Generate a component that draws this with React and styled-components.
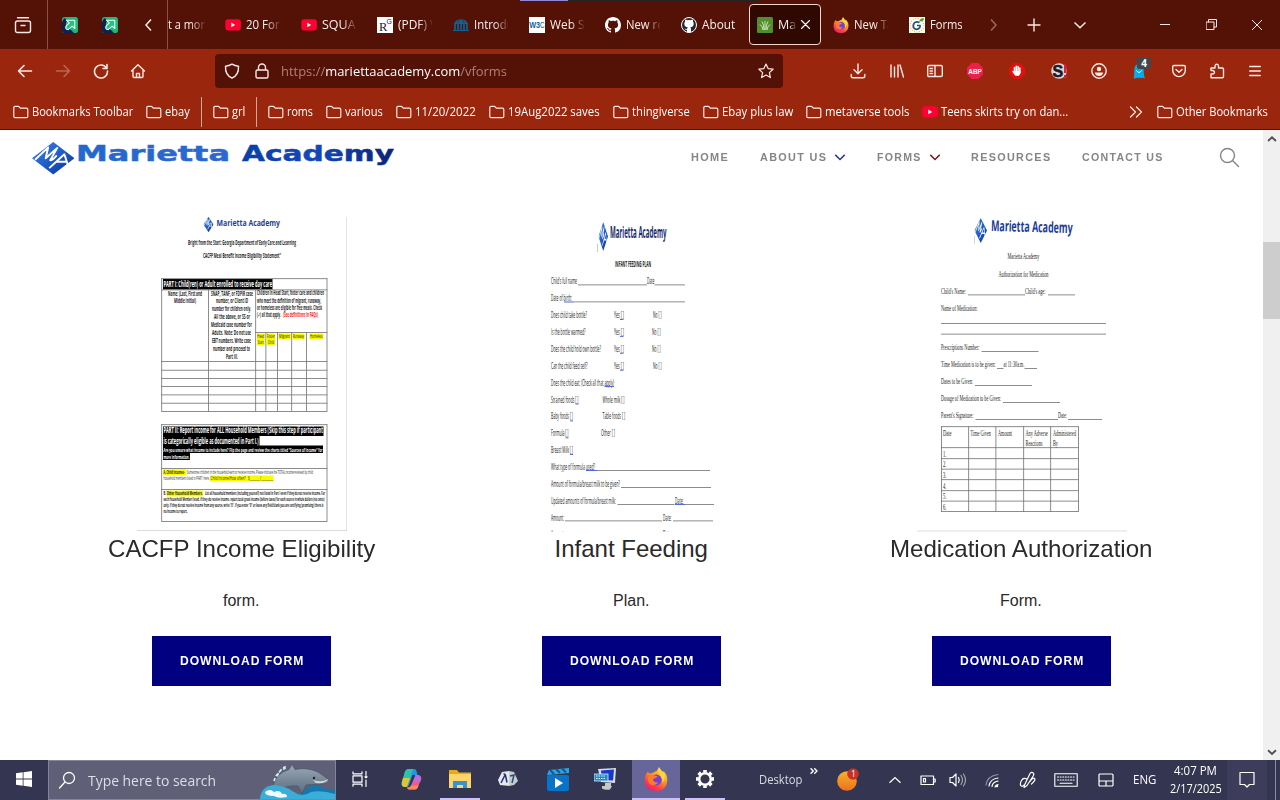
import React, { useLayoutEffect, useRef, useState } from "react";
import styled, { createGlobalStyle } from "styled-components";

const Global = createGlobalStyle`
  * { box-sizing: border-box; }
  body { margin: 0; overflow: hidden; background: #fff; }
`;

const ui = `"Open Sans", "Noto Sans", sans-serif`;
const arial = `"Liberation Sans", Arial, sans-serif`;

/* ---------- text that keeps a given width ---------- */
const FitBox = styled.span`
  display: block;
  flex: none;
  width: ${(p) => p.$w}px;
  white-space: nowrap;
  line-height: ${(p) => p.$lh || 20}px;
`;
const FitInner = styled.span`
  display: inline-block;
  transform-origin: 0 50%;
  white-space: pre;
`;
function Fit({ w, lh, children, className }) {
  const ref = useRef(null);
  const [k, setK] = useState(1);
  useLayoutEffect(() => {
    if (ref.current) setK(w / ref.current.offsetWidth);
  }, [w]);
  return (
    <FitBox $w={w} $lh={lh} className={className}>
      <FitInner ref={ref} style={{ transform: `scaleX(${k})` }}>{children}</FitInner>
    </FitBox>
  );
}

/* ---------- shell ---------- */
const Screen = styled.div`
  width: 1280px;
  height: 800px;
  display: flex;
  flex-direction: column;
  overflow: hidden;
  font-family: ${ui};
  position: relative;
`;
const Slot = styled.div`
  flex: none;
  width: ${(p) => p.$w || 24}px;
  margin-left: ${(p) => p.$ml || 0}px;
  height: ${(p) => p.$h || 24}px;
  display: flex;
  align-items: center;
  justify-content: center;
  position: relative;
`;

/* ---------- tab strip ---------- */
const TabStrip = styled.div`
  height: 49px;
  flex: none;
  background: #541207;
  display: flex;
  align-items: center;
  padding-left: 11px;
  position: relative;
`;
const TopEdge = styled.div`
  position: absolute;
  top: 0;
  left: 520px;
  width: 241px;
  height: 1px;
  background: linear-gradient(90deg, #8f86d6 48px, #242424 48px);
`;
const StripDivider = styled.div`
  flex: none;
  width: 1px;
  height: 49px;
  margin-left: ${(p) => p.$ml}px;
  background: #8a5247;
`;
const TabList = styled.div`
  display: flex;
  gap: 4px;
  flex: none;
  width: 813px;
  height: 49px;
  align-items: center;
`;
const TabBox = styled.div`
  flex: none;
  width: ${(p) => p.$w || 72}px;
  height: 41px;
  display: flex;
  align-items: center;
  gap: 5px;
  padding-left: ${(p) => (p.$w ? 0 : p.$active ? 7 : 8)}px;
  border-radius: 4px;
  background: ${(p) => (p.$active ? "#2f0802" : "transparent")};
  border: ${(p) => (p.$active ? "1px solid #f6d5cd" : "0")};
`;
const TabLabel = styled.div`
  width: ${(p) => p.$clip}px;
  overflow: hidden;
  font-size: 12.5px;
  color: #fbeeeb;
  mask-image: ${(p) => (p.$fade ? "linear-gradient(90deg, #000 60%, rgba(0, 0, 0, 0.1) 100%)" : "none")};
`;

/* ---------- nav bar ---------- */
const NavBar = styled.div`
  height: 45px;
  flex: none;
  background: #99260d;
  display: flex;
  align-items: center;
  padding: 0 0 1px 13px;
`;
const UrlBox = styled.div`
  width: 568px;
  height: 34px;
  margin-left: 65px;
  border-radius: 4px;
  background: #541207;
  display: flex;
  align-items: center;
  padding-left: 5px;
  font-size: 13px;
  color: #b08078;
`;
const Host = styled.span`color: #fff;`;
const Badge = styled.div`
  position: absolute;
  left: 10px;
  top: -2px;
  width: 14px;
  height: 12px;
  border-radius: 2px;
  background: #43474d;
  color: #fff;
  font: bold 10px/12px ${ui};
  text-align: center;
`;

/* ---------- bookmarks ---------- */
const BookmarkBar = styled.div`
  height: 36px;
  flex: none;
  background: #99260d;
  border-bottom: 1px solid #5c1104;
  display: flex;
  align-items: center;
  padding-left: 13px;
`;
const BookmarkItem = styled.div`
  flex: none;
  display: flex;
  align-items: center;
  gap: 3px;
  margin-right: ${(p) => p.$mr}px;
  font-size: 12px;
  color: #fff;
`;
const MarkDivider = styled.div`
  width: 1px;
  height: 30px;
  flex: none;
  margin-right: 11px;
  background: #d3a59b;
`;

/* ---------- web page ---------- */
const Page = styled.div`
  height: 630px;
  flex: none;
  display: flex;
`;
const Content = styled.div`
  width: 1263px;
  background: #fff;
  font-family: ${arial};
`;
const ScrollTrack = styled.div`
  width: 17px;
  background: #f0f0f0;
  display: flex;
  flex-direction: column;
  align-items: center;
`;
const ScrollThumb = styled.div`
  width: 17px;
  height: 77px;
  margin: 95px 0 424px;
  background: #cdcdcd;
`;
const SiteHeader = styled.header`
  height: 87px;
  display: flex;
  align-items: flex-start;
  padding-left: 32px;
`;
const SiteNav = styled.nav`
  display: flex;
  align-items: center;
  height: 54px;
  margin-left: 294px;
  color: #858585;
  font-size: 11.5px;
  font-weight: bold;
  letter-spacing: 1.4px;
`;
const NavEntry = styled.div`
  display: flex;
  align-items: center;
  gap: 7px;
  margin-right: ${(p) => p.$mr}px;
`;
const CardRow = styled.main`
  display: grid;
  grid-template-columns: 390px 390px 390px;
  padding-left: 46px;
`;
const Card = styled.section`
  display: flex;
  flex-direction: column;
  align-items: center;
`;
const CardTitle = styled.h2`
  margin: 4px 0 0;
  font-size: 24px;
  font-weight: 400;
  color: #2a2a2a;
`;
const CardText = styled.div`
  margin-top: 30px;
  font-size: 16px;
  color: #2a2a2a;
`;
const DownloadButton = styled.button`
  width: 179px;
  height: 50px;
  margin-top: 26px;
  border: 0;
  padding: 0 0 0 1px;
  background: #000080;
  color: #fff;
  display: flex;
  align-items: center;
  justify-content: center;
  font: bold 12.5px ${arial};
  letter-spacing: 1px;
`;

/* ---------- task bar ---------- */
const TaskBar = styled.div`
  height: 40px;
  flex: none;
  background: #343550;
  display: flex;
  align-items: center;
  color: #fff;
`;
const SearchBox = styled.div`
  width: 288px;
  height: 40px;
  flex: none;
  border: 1px solid #85859a;
  background: #5f5f78;
  display: flex;
  align-items: center;
  padding-left: 9px;
  font-size: 15px;
  color: #dedee6;
`;
const AppCell = styled.div`
  flex: none;
  width: ${(p) => p.$w}px;
  margin-left: ${(p) => p.$ml || 0}px;
  height: 40px;
  display: flex;
  align-items: center;
  justify-content: center;
  background: ${(p) => (p.$active ? "#66669a" : "transparent")};
  border-bottom: 2px solid ${(p) => (p.$open ? "#cdc0f8" : "transparent")};
`;
const TrayText = styled.div`
  flex: none;
  margin-left: ${(p) => p.$ml}px;
  margin-top: ${(p) => p.$mt || 0}px;
  font-size: 12px;
  color: ${(p) => p.$c || "#fff"};
`;
const Clock = styled.div`
  flex: none;
  width: 53px;
  margin-left: 13px;
  display: flex;
  flex-direction: column;
  align-items: center;
  font-size: 12px;
`;
const NoticeCell = styled.div`
  flex: none;
  display: flex;
  align-items: center;
  justify-content: center;
  width: 40px;
  height: 40px;
  margin-left: 5px;
  background: #3d3d5b;
`;
const DesktopEdge = styled.div`
  width: 1px;
  height: 40px;
  margin-left: 8px;
  background: #8b8ba0;
`;

/* ---------- icons ---------- */
const Line = ({ w = 16, h = 16, d, c = "#fbe9e5", sw = 1.4, children, fill = "none" }) => (
  <svg width={w} height={h} viewBox={`0 0 ${w} ${h}`} fill={fill} stroke={c} strokeWidth={sw} strokeLinecap="round" strokeLinejoin="round">
    {d && <path d={d} />}
    {children}
  </svg>
);
const Folder = () => <Line w={16} h={14} sw={1.2} d="M.8 11.5v-9q0-1.200 1.200-1.200h3.200q.6 0 1 .5l.8 1q.4.4 1 .4h5.500q1.300 0 1.300 1.200v7q0 1.200-1.200 1.200H2q-1.200 0-1.200-1.100z" />;
const YouTube = () => (
  <svg width="16" height="16" viewBox="0 0 16 16"><rect x="0.3" y="2.2" width="15.6" height="11.4" rx="3" fill="#ff0033" /><path d="M6.3 5.6v4.6L10.2 8z" fill="#fff" /></svg>
);
const Arrowed = () => (
  <svg width="16" height="16" viewBox="0 0 16 16">
    <rect width="16" height="16" rx="2.5" fill="#20b779" />
    <path d="M0 5q1-3 3-4l2 3q-2 2-1 5l5 4 3 3H2.5Q0 16 0 13.5z" fill="#13204f" />
    <path d="M4.500 3.200h8.300v8.300l-2.600-2.400-4 3.600-1.800-.6q-1.500-2 .3-3.800L7.200 6z" fill="#27bf80" stroke="#e5fff3" strokeWidth="1.100" strokeLinejoin="round" />
  </svg>
);
const ResearchGate = () => (
  <svg width="16" height="16" viewBox="0 0 16 16"><rect width="16" height="16" fill="#fff" /><text x="2" y="13.5" fontFamily="Liberation Serif" fontSize="12.5" fill="#223">R</text><text x="9.6" y="6.8" fontFamily="Liberation Sans" fontSize="7" fill="#223">G</text></svg>
);
const Dome = () => (
  <svg width="16" height="16" viewBox="0 0 16 16"><path d="M1 7q1.5-4.8 7-4.8T15 7zM0 13h16v1H0z" fill="#0d6297" /><path d="M2 6.5V14M5 5v9M8 3v11M11 5v9M14 6.5V14" stroke="#0d6297" strokeWidth="1.7" /><path d="M4.8 6q.5-3 2-3.3M11.2 6q-.5-3-2-3.3" stroke="#541207" strokeWidth=".6" fill="none" /></svg>
);
const W3C = () => (
  <svg width="16" height="16" viewBox="0 0 16 16"><rect width="16" height="16" fill="#fff" /><text x="0.2" y="11" fontFamily="Liberation Sans" fontWeight="bold" fontSize="9" textLength="10.8" lengthAdjust="spacingAndGlyphs" fill="#0b5ea8">W3</text><text x="11" y="11" fontFamily="Liberation Sans" fontSize="8.6" textLength="4.600" lengthAdjust="spacingAndGlyphs" fill="#444">C</text></svg>
);
const GH = "M8 0C3.58 0 0 3.58 0 8c0 3.54 2.29 6.53 5.47 7.59.4.07.55-.17.55-.38 0-.19-.01-.82-.01-1.49-2.01.37-2.53-.49-2.69-.94-.09-.23-.48-.94-.82-1.13-.28-.15-.68-.52-.01-.53.63-.01 1.08.58 1.23.82.72 1.21 1.87.87 2.33.66.07-.52.28-.87.51-1.07-1.78-.2-3.64-.89-3.64-3.95 0-.87.31-1.59.82-2.15-.08-.2-.36-1.02.08-2.12 0 0 .67-.21 2.2.82.64-.18 1.32-.27 2-.27s1.36.09 2 .27c1.53-1.04 2.2-.82 2.2-.82.44 1.1.16 1.92.08 2.12.51.56.82 1.27.82 2.15 0 3.07-1.87 3.75-3.65 3.95.29.25.54.73.54 1.48 0 1.07-.01 1.93-.01 2.2 0 .21.15.46.55.38A8.01 8.01 0 0 0 16 8c0-4.42-3.58-8-8-8z";
const GitHub = ({ dark }) => (
  <svg width="16" height="16" viewBox="0 0 16 16">
    {dark && <circle cx="8" cy="8" r="7.500" fill="#24292f" stroke="#fff" />}
    <path d={dark ? "M6 15.200v-2.500q-2 .3-2.700-1.200 1.500.8 2.900.2.100-.8.600-1.200Q3.300 10 3.300 6.800q0-1.300.8-2.200-.3-1 .1-2.100 1.200 0 2.300.8 1.500-.4 3 0 1.100-.8 2.300-.8.400 1.100.1 2.100.8.900.8 2.200 0 3.200-3.500 3.700.8.700.8 2v2.700z" : GH} fill="#fff" />
  </svg>
);
const Grass = () => (
  <svg width="16" height="16" viewBox="0 0 16 16"><rect width="16" height="16" rx="1.5" fill="#538e2e" /><path d="M8 13V4M7 13Q7 7.500 5 4.500M9 13q0-5.500 2-8.500M6 13Q5.800 9.500 3 7.500M10 13q.2-3.500 3-5.500" stroke="#e6f7d5" strokeWidth=".8" fill="none" /></svg>
);
const Firefox = ({ s = 16 }) => (
  <svg width={s} height={s} viewBox="0 0 24 24">
    <defs>
      <linearGradient id="ffa" x1=".8" y1="0" x2=".2" y2="1"><stop offset="0" stopColor="#fff04a" /><stop offset=".4" stopColor="#ff9a20" /><stop offset=".75" stopColor="#ff3c47" /><stop offset="1" stopColor="#ea1886" /></linearGradient>
    </defs>
    <path d="M3.5 5q1.2.3 2 1.5 1.8-.8 3-.4 2-1.6 4.3-2L15 0q1.5 2.8 4 4.7l1-.3q3.6 4.2 3.3 9Q22.500 24 12 24 2 24 .8 14.500.3 9 3.500 5z" fill="url(#ffa)" />
    <circle cx="12.300" cy="13" r="5.400" fill="#7141d8" />
    <path d="M4 10q3-3.800 6.500-1.500l3 .8q.3 1.200-2.200 1.700-2.500.6-2.100 2.800 1.800 2.400 5.300 1.500-2.500 4-7.500 2.500Q3.500 16 4 10z" fill="#ff7a2e" />
    <path d="M14.500 2q-.6 5 2.700 7.500 2 3 .8 6.500 3.500-3 2.500-8-1-1.800-3-3-1.800-1.200-3-3z" fill="#ffd83c" />
  </svg>
);
const FormsG = () => (
  <svg width="16" height="16" viewBox="0 0 16 16"><rect width="16" height="16" fill="#fff" /><circle cx="8" cy="8.300" r="6.800" fill="none" stroke="#e8c34a" strokeWidth="1.300" strokeDasharray="1.200 1.300" /><path d="M10.500 5.500Q7 3.700 5 6.300q-1.700 3.200.3 5.200 3 1.800 5.200-.6.800-1 .5-2.400H8" fill="none" stroke="#28526e" strokeWidth="1.700" /><path d="M10 4.500Q11 1 15 1q0 4-5 3.500z" fill="#4ba52c" /></svg>
);

const Chev = ({ dir, c, w = 14, sw }) => {
  const d = { left: "M9 1.500L4 7l5 5.500", right: "M5 1.500L10 7l-5 5.500", down: "M1.500 4.500L7 9.800l5.500-5.300", up: "M1.500 9.800L7 4.500l5.500 5.300" }[dir];
  return <svg width={w} height={w} viewBox="0 0 14 14" fill="none" stroke={c || "#fbe9e5"} strokeWidth={sw || 1.500}><path d={d} /></svg>;
};

/* ---------- thumbnails ---------- */
const T = ({ x, y, w, s = 6.4, b, c = "#222", f, children }) => (
  <text x={x} y={y} textLength={w} lengthAdjust="spacingAndGlyphs" fontSize={s} fontWeight={b ? 700 : 400} fill={c} fontFamily={f || "'Open Sans', sans-serif"} style={{ whiteSpace: "pre" }}>{children}</text>
);
const L = ({ x, y, w, c = "#707070", h = 0.8 }) => <rect x={x} y={y} width={w} height={h} fill={c} />;
const V = ({ x, y, h, c = "#707070" }) => <rect x={x} y={y} width={0.8} height={h} fill={c} />;
const Emblem = ({ x, y, w, h, id }) => (
  <svg x={x} y={y} width={w} height={h} viewBox="0 0 42 34" preserveAspectRatio="none">
    <defs><linearGradient id={id} x1="0" y1="0" x2="1" y2="1"><stop offset="0" stopColor="#3f86e6" /><stop offset=".5" stopColor="#1f5cc9" /><stop offset="1" stopColor="#0b2f98" /></linearGradient></defs>
    <path d="M21 .5L42 17 21 33.500 0 17z" fill={`url(#${id})`} />
    <path d="M3 18.500L16 6l-2.500 11L25 6.500 18 19q2.500 0 6.500-5M17 27L32 13l3.500 11M23.500 20.500h11" fill="none" stroke="#fff" strokeWidth="1.900" strokeLinejoin="round" />
  </svg>
);

const Cacfp = () => (
  <svg width="212" height="315" viewBox="135 217 212 315">
    <Emblem x={203.500} y={216.500} w={10} h={16} id="e1" />
    <T x={216.500} y={225.500} w={63.500} s={9.500} b c="#1d419b">Marietta Academy</T>
    <T x={188} y={244.800} w={108} b>Bright from the Start: Georgia Department of Early Care and Learning</T>
    <T x={203} y={258.300} w={78} b>CACFP Meal Benefit Income Eligibility Statement"</T>
    <rect x={163} y={279} width={109.500} height={10.500} fill="#000" />
    <T x={163.500} y={287} w={108.500} s={8} b c="#fff">PART I: Child(ren) or Adult enrolled to receive day care</T>
    {[278.300, 289.500, 361, 369.800, 378, 386.200, 394.500, 402.800, 411].map((y) => <L key={y} x={161.300} y={y} w={166} />)}
    <L x={255.300} y={332} w={72} />
    {[161.300, 326.600].map((x) => <V key={x} x={x} y={278.300} h={133} />)}
    {[208, 255.300].map((x) => <V key={x} x={x} y={289.500} h={122} />)}
    {[265.500, 277.200, 291.300, 306].map((x) => <V key={x} x={x} y={332} h={79} />)}
    <T x={168} y={295.500} w={34} b>Name: (Last, First and</T>
    <T x={174} y={303.300} w={22} b>Middle Initial)</T>
    {[["SNAP, TANF, or FDPIR case", 211, 42], ["number, or Client ID", 216, 32], ["number for children only.", 212, 39], ["All the above, or SS or", 214, 36], ["Medicaid case number for", 211, 41], ["Adults. Note: Do not use", 212, 39], ["EBT numbers. Write case", 212, 39], ["number and proceed to", 213, 37], ["Part III.", 226, 12]].map(([t, x, w], i) => (
      <T key={t} x={x} y={295.500 + i * 7.950} w={w} b>{t}</T>
    ))}
    <T x={257} y={295.300} w={67} b>Children in Head Start, foster care and children</T>
    <T x={257} y={302.700} w={64} b>who meet the definition of migrant, runaway,</T>
    <T x={257} y={310} w={65} b>or homeless are eligible for free meals. Check</T>
    <T x={257} y={317.300} w={24} b>(✓) all that apply.</T>
    <T x={283} y={317.300} w={35} b c="#f11">(See definitions in FAQs)</T>
    {[[257, 7.500, 12], [266.500, 8.500, 12], [278.500, 12, 6], [292.500, 12, 6], [309.500, 13.500, 6]].map(([x, w, h]) => <rect key={x} x={x} y={333.500} width={w} height={h} fill="#f6f600" />)}
    <T x={257.300} y={338} w={7} s={5}>Head</T><T x={257.800} y={344.300} w={6} s={5}>Start</T>
    <T x={267} y={338} w={8} s={5}>Foster</T><T x={268} y={344.300} w={6} s={5}>Child</T>
    <T x={279} y={338} w={11} s={5}>Migrant</T><T x={293} y={338} w={11} s={5}>Runaway</T><T x={310} y={338} w={12.500} s={5}>Homeless</T>
    <rect x={163} y={426.500} width={160.500} height={9.500} fill="#000" />
    <rect x={163} y={436} width={96.500} height={10} fill="#000" />
    <rect x={163} y={445.500} width={160} height={7.500} fill="#000" />
    <rect x={163} y={452.500} width={27} height={7.500} fill="#000" />
    <T x={163.500} y={433.300} w={159.500} s={8} b c="#fff">PART II: Report income for ALL Household Members (Skip this step if participant</T>
    <T x={163.500} y={443.700} w={95} s={8} b c="#fff">is categorically eligible as documented in Part I.)</T>
    <T x={163.500} y={451.500} w={159} s={5.800} b c="#fff">Are you unsure what income to include here? Flip the page and review the charts titled "Sources of Income" for</T>
    <T x={163.500} y={458.500} w={26} s={5.800} b c="#fff">more information.</T>
    {[424.300, 468, 489, 521].map((y) => <L key={y} x={161.300} y={y} w={166} />)}
    {[161.300, 326.600].map((x) => <V key={x} x={x} y={424.300} h={97} />)}
    <rect x={163} y={469.300} width={23.500} height={6} fill="#fbfb00" />
    <rect x={210} y={475.500} width={63.500} height={6} fill="#fbfb00" />
    <T x={163.500} y={473.600} w={21} s={5} b>A. Child Incomes-</T>
    <T x={187} y={473.600} w={126} s={5}>Sometimes children in the household earn or receive income. Please indicate the TOTAL income received by child</T>
    <T x={163.500} y={480.200} w={46} s={5}>household members listed in PART I here.</T>
    <T x={210.500} y={480.200} w={62.500} s={5}>Child Income/How often?   $________/_________</T>
    <rect x={166.500} y={490.500} width={36.500} height={6} fill="#fbfb00" />
    <T x={163.500} y={495} w={39} s={5} b>B. Other Household Members.</T>
    <T x={205} y={495} w={120} s={5} b>List all household members (including yourself) not listed in Part I even if they do not receive income. For</T>
    <T x={163.500} y={501} w={161} s={5} b>each Household Member listed, if they do receive income, report total gross income (before taxes) for each source in whole dollars (no cents)</T>
    <T x={163.500} y={507} w={160} s={5} b>only. If they do not receive income from any source, write "0". If you enter "0" or leave any field blank you are certifying (promising) there is</T>
    <T x={163.500} y={512.800} w={24} s={5} b>no income to report.</T>
    <L x={137} y={530} w={210} c="#dcdcdc" h={1} />
    <V x={346.200} y={217} h={314} c="#dcdcdc" />
  </svg>
);

const I = ({ x, y, w, children }) => <T x={x} y={y} w={w} s={8.500}>{children}</T>;
const Blue = ({ x, y, w }) => <L x={x} y={y} w={w} c="#5266dd" h={1} />;
const Infant = () => (
  <svg width="212" height="315" viewBox="525 217 212 315">
    <Emblem x={598.500} y={221.500} w={9.500} h={30} id="e2" />
    <T x={610} y={237.500} w={56.500} s={16} b c="#1a2c72">Marietta Academy</T>
    <V x={597} y={244} h={8} c="#bbb" />
    <T x={615} y={267} w={36} s={8} b>INFANT FEEDING PLAN</T>
    <I x={551} y={284} w={26}>Child's full name</I><L x={578} y={284.500} w={69} /><I x={647} y={284} w={7.500}>Date</I><L x={654.500} y={284.500} w={30.500} />
    <I x={551} y={301} w={21}>Date of birth:</I><L x={574} y={301.500} w={111} /><Blue x={564} y={301.500} w={10} />
    {[["Does child take bottle?", 36, 653], ["Is the bottle warmed?", 34.500, 652], ["Does the child hold own bottle?", 50, 652], ["Can the child feed self?", 36.500, 653]].map(([t, w, n], i) => (
      <g key={t}><I x={551} y={318 + i * 16.900} w={w}>{t}</I><I x={614} y={318 + i * 16.900} w={10}>Yes [ ]</I><Blue x={620} y={319 + i * 16.900} w={3.500} /><I x={n} y={318 + i * 16.900} w={8.500}>No [ ]</I></g>
    ))}
    <I x={551} y={385.500} w={63}>Does the child eat: (Check all that apply)</I><Blue x={604.500} y={386} w={9.500} />
    {[["Strained foods [ ]", 27.500, "Whole milk [ ]", 602.500, 22], ["Baby foods [ ]", 22, "Table foods [ ]", 602.500, 22.500], ["Formula [ ]", 17.500, "Other [ ]", 601, 14]].map(([a, w, b, x, v], i) => (
      <g key={a}><I x={551} y={402.500 + i * 16.900} w={w}>{a}</I><Blue x={548 + w} y={403.500 + i * 16.900} w={3} /><I x={x} y={402.500 + i * 16.900} w={v}>{b}</I></g>
    ))}
    <I x={551} y={453} w={22}>Breast Milk [ ]</I><Blue x={570} y={454} w={3} />
    <I x={551} y={470} w={44}>What type of formula used?</I><L x={597} y={470} w={113} /><Blue x={586} y={470} w={11} />
    <I x={551} y={487} w={69}>Amount of formula/breast milk to be given?</I><L x={621} y={487} w={90} />
    <I x={551} y={504} w={65}>Updated amounts of formula/breast milk:</I><L x={617.500} y={504} w={57} /><I x={675} y={504} w={8.500}>Date:</I><L x={685} y={504} w={29} /><Blue x={675} y={504} w={10} />
    <I x={551} y={520.500} w={13}>Amount:</I><L x={565} y={520.500} w={97} /><I x={663} y={520.500} w={8.500}>Date:</I><L x={673} y={520.500} w={40} />
    <I x={551} y={537} w={13}>Amount:</I><I x={663} y={537} w={8.500}>Date:</I>
  </svg>
);

const S = ({ x, y, w, children }) => <T x={x} y={y} w={w} s={9.200} f="'Liberation Serif', serif" c="#1c1c1c">{children}</T>;
const Medication = () => (
  <svg width="212" height="315" viewBox="915 217 212 315">
    <Emblem x={974.500} y={217.500} w={12.500} h={26} id="e3" />
    <g transform="rotate(1.500 991 230)"><T x={991} y={231} w={81.500} s={15} b c="#1a3c98">Marietta Academy</T></g>
    <V x={974} y={236} h={8} c="#ccc" />
    <S x={1007.500} y={259.300} w={32}>Marietta Academy</S>
    <S x={998.500} y={276.500} w={50}>Authorization for Medication</S>
    <S x={941} y={293.800} w={25}>Child's Name:</S><L x={968} y={294.500} w={57} /><S x={1025} y={293.800} w={20.500}>Child's age:</S><L x={1048} y={294.500} w={27} />
    <S x={941} y={310.800} w={36.500}>Name of Medication:</S>
    <L x={941} y={323} w={165} /><L x={941} y={333.700} w={165} />
    <S x={941} y={350.300} w={38.500}>Prescriptions Number:</S><L x={981.500} y={351} w={57} />
    <S x={941} y={367} w={54.500}>Time Medication is to be given:</S><L x={997} y={368} w={6.500} /><S x={1003.500} y={367} w={21}>at 11:30a.m.</S><L x={1024.500} y={368} w={12.500} />
    <S x={941} y={384} w={32}>Dates to be Given:</S><L x={975} y={385} w={57} />
    <S x={941} y={401.200} w={60}>Dosage of Medication to be Given:</S><L x={1003} y={402} w={57} />
    <S x={941} y={418.300} w={32.500}>Parent's Signature:</S><L x={975.500} y={419} w={82.500} /><S x={1058} y={418.300} w={9}>Date:</S><L x={1068} y={419} w={34} />
    {[426.300, 447.300, 458.300, 468.700, 479.300, 490.300, 500.700, 511.200].map((y) => <L key={y} x={941} y={y} w={137.500} />)}
    {[941, 968.300, 995.500, 1023.300, 1050.300, 1078].map((x) => <V key={x} x={x} y={426.300} h={85.500} />)}
    <S x={943} y={435.500} w={8.500}>Date</S><S x={970.500} y={435.500} w={20.500}>Time Given</S><S x={998} y={435.500} w={14}>Amount</S>
    <S x={1025.500} y={435.500} w={22.500}>Any Adverse</S><S x={1025.500} y={445.800} w={17}>Reactions</S><S x={1053} y={435.500} w={23}>Administered</S><S x={1053} y={445.800} w={5}>By</S>
    {[1, 2, 3, 4, 5, 6].map((n) => <S key={n} x={943} y={445.800 + n * 10.700} w={3.500}>{n + "."}</S>)}
    <L x={917} y={530.500} w={210} c="#dedede" h={1} />
  </svg>
);

const SiteLogo = () => (
  <svg width="365" height="48" viewBox="32 130 365 48">
    <defs><linearGradient id="lg" gradientUnits="userSpaceOnUse" x1="77" y1="0" x2="395" y2="0"><stop offset="0" stopColor="#2368cc" /><stop offset=".48" stopColor="#2b68d2" /><stop offset=".52" stopColor="#0b3fa8" /><stop offset=".75" stopColor="#1249b8" /><stop offset="1" stopColor="#0a2478" /></linearGradient></defs>
    <Emblem x={32} y={141.500} w={42.500} h={33.500} id="e0" />
    <g fontFamily="'DejaVu Sans', sans-serif" fontWeight="bold" fontSize="22" fill="url(#lg)" stroke="url(#lg)" strokeWidth=".5">
      <text x="76" y="161.300" textLength="154" lengthAdjust="spacingAndGlyphs">Marietta</text>
      <text x="242" y="161.300" textLength="152" lengthAdjust="spacingAndGlyphs">Academy</text>
    </g>
  </svg>
);

const tabs = [
  [<YouTube />, "20 For", 34], [<YouTube />, "SQUAR", 41], [<ResearchGate />, "(PDF) V", 39], [<Dome />, "Introdu", 40],
  [<W3C />, "Web St", 39], [<GitHub />, "New re", 38], [<GitHub dark />, "About", 33], [<Grass />, "Mar", 23, true],
  [<Firefox />, "New Ta", 39], [<FormsG />, "Forms", 33],
];
const marks = [
  ["Bookmarks Toolbar", 101, 13], ["ebay", 25, 11, true], ["grl", 13, 11, true], ["roms", 26, 13], ["various", 38, 13],
  ["11/20/2022", 61, 13], ["19Aug2022 saves", 92, 13], ["thingiverse", 58, 13], ["Ebay plus law", 71, 13], ["metaverse tools", 84, 13],
];
const cards = [
  [<Cacfp />, "CACFP Income Eligibility", 267, "form.", 36],
  [<Infant />, "Infant Feeding", 153, "Plan.", 36],
  [<Medication />, "Medication Authorization", 263, "Form.", 42],
];

export default function App() {
  return (
    <Screen>
      <Global />
      <TabStrip>
        <TopEdge />
        <Slot><Line w={18} h={18} d="M3.500 1.700h11M3.500 5h11q2 0 2 2v7.500q0 2-2 2h-11q-2 0-2-2V7q0-2 2-2zM7 9.500h4" /></Slot>
        <StripDivider $ml={12} />
        <Slot $ml={10}><Arrowed /></Slot>
        <Slot $ml={16}><Arrowed /></Slot>
        <Slot $ml={15}><Chev dir="left" /></Slot>
        <StripDivider $ml={6} />
        <TabList>
          <TabBox $w={45}><TabLabel $clip={37} $fade><Fit w={43}>t a mont</Fit></TabLabel></TabBox>
          {tabs.map(([icon, label, w, active], i) => (
            <TabBox key={i} $active={active}>
              {icon}
              <TabLabel $clip={active ? 18 : 34} $fade={w > 33 || active}><Fit w={w}>{label}</Fit></TabLabel>
              {active && <Line w={9} h={9} sw={1.100} c="#fff" d="M.5.5l8 8M8.500.5l-8 8" />}
            </TabBox>
          ))}
        </TabList>
        <Slot><Chev dir="right" c="#9a685e" /></Slot>
        <Slot $ml={17}><Line w={14} h={14} d="M7 1v12M1 7h12" /></Slot>
        <Slot $ml={22}><Chev dir="down" /></Slot>
        <Slot $ml={61}><Line w={10} h={10} sw={1} d="M0 4.500h10" /></Slot>
        <Slot $ml={22}><Line w={11} h={11} sw={1} d="M.5 3h7.500v7.500H.5zM2.500 3V.5h8V8H8" /></Slot>
        <Slot $ml={22}><Line w={10} h={10} sw={1} d="M0 0l10 10M10 0L0 10" /></Slot>
      </TabStrip>

      <NavBar>
        <Slot><Line d="M1.500 8h13M7 2.500L1.500 8 7 13.500" sw={1.600} /></Slot>
        <Slot $ml={14}><Line c="#bd6553" d="M1.500 8h13M9 2.500L14.500 8 9 13.500" sw={1.600} /></Slot>
        <Slot $ml={14}><Line d="M13.500 5A6.500 6.500 0 1 0 14.500 8M14 1.500V5.500H10" sw={1.600} /></Slot>
        <Slot $ml={13}><Line d="M1.500 8L8 1.800 14.500 8M3 7v6.500q0 1 1 1h8q1 0 1-1V7M6.500 14.500V10.500h3v4" /></Slot>
        <UrlBox>
          <Slot><Line d="M8 1.200Q11 3 14.500 3.200 15 12 8 15 1 12 1.500 3.200 5 3 8 1.200z" /></Slot>
          <Slot $ml={6}><Line d="M3.500 7h9q1.500 0 1.500 1.500v5q0 1.500-1.500 1.500h-9Q2 15 2 13.500v-5Q2 7 3.500 7zM4.500 7V4.500a3.500 3.500 0 0 1 7 0V7" /></Slot>
          <Slot $w={7} />
          <Fit w={226}>https://<Host>mariettaacademy.com</Host>/vforms</Fit>
          <Slot $ml={247}><Line d="M8 1l2.100 4.600 5 .6-3.700 3.400 1 5L8 12.100l-4.400 2.500 1-5L.9 6.200l5-.6z" sw={1.200} /></Slot>
        </UrlBox>
        <Slot $ml={63}><Line d="M8 1v9.500M4 6.800l4 4 4-4M1.200 11.500v1.500q0 1.800 1.800 1.800h10q1.800 0 1.800-1.800v-1.500" /></Slot>
        <Slot $ml={15}><Line w={14} h={14} d="M1 1v12M4.500 3v10M8 1v12M10 1l3.500 12" /></Slot>
        <Slot $ml={14}><Line d="M2 2.500h12q1.300 0 1.300 1.300v8.400q0 1.300-1.300 1.300H2q-1.300 0-1.300-1.300V3.800Q.7 2.500 2 2.500zM8 2.500v11M3 5.500h2.500M3 8h2.500M3 10.500h2.500" /></Slot>
        <Slot $ml={16}><svg width="16" height="16" viewBox="0 0 16 16"><path d="M4.700 0h6.600L16 4.700v6.600L11.300 16H4.700L0 11.300V4.700z" fill="#ed1f4b" /><text x="1.300" y="10.600" textLength="13.500" lengthAdjust="spacingAndGlyphs" fontFamily="Liberation Sans" fontWeight="bold" fontSize="7.500" fill="#fff">ABP</text></svg></Slot>
        <Slot $ml={18}><svg width="16" height="16" viewBox="0 0 16 16"><path d="M4.700 0h6.600L16 4.700v6.600L11.300 16H4.700L0 11.300V4.700z" fill="#e30e0e" /><path d="M5.500 4.500V9M7.300 3.200V9M9.100 3.500V9M10.900 5v5M4 8.500l2.500 3.300" stroke="#fff" strokeWidth="1.500" strokeLinecap="round" /><path d="M5 8h6.500q0 5-3 5Q6 13 5 10z" fill="#fff" /></svg></Slot>
        <Slot $ml={18}><svg width="16" height="16" viewBox="0 0 16 16"><circle cx="8" cy="8" r="7.800" fill="#ddd6d2" /><text x="1.500" y="13.800" fontFamily="Liberation Sans" fontWeight="bold" fontSize="16" fill="#171a32" stroke="#171a32" strokeWidth=".6">S</text><path d="M13 1.500h2.500V10H13zM13 12h2.500v3H13z" fill="#db2032" /></svg></Slot>
        <Slot $ml={16}><Line d="M8 .8a7.200 7.200 0 1 1 0 14.400A7.200 7.200 0 0 1 8 .8z"><circle cx="8" cy="6" r="2.200" fill="#fbe9e5" stroke="none" /><path d="M3.800 9.500h8.400Q11.500 13 8 13T3.800 9.500z" fill="#fbe9e5" stroke="none" /></Line></Slot>
        <Slot $ml={16}><svg width="14" height="16" viewBox="0 0 14 16"><path d="M1.500 15q.8-2 .8-8Q2.500 1 7 1t4.700 6q0 6 1.300 8-1.700.8-2.500-.5-1.500 1.500-2.700 0-1.500 1.500-2.700 0Q3.500 16 1.500 15z" fill="#00aef0" /><path d="M4.500 7.500q2.500 4 5 0" stroke="#fff" fill="none" /></svg><Badge>4</Badge></Slot>
        <Slot $ml={16}><Line w={14} h={14} d="M2 1.500h10q1.300 0 1.300 1.300v3.500a6.300 6.300 0 0 1-12.600 0V2.800Q.7 1.500 2 1.500zM4 5.500l3 2.800 3-2.800" /></Slot>
        <Slot $ml={14}><Line d="M2 14.800V11h2q1.500-.3 1.500-1.700T4 7.500H2V5h4V3q.2-1.700 1.700-1.700T9.500 3v2h4q1 0 1 1v7.800q0 1-1 1z" /></Slot>
        <Slot $ml={14}><Line w={12} h={12} d="M.7 1.500h10.600M.7 6h10.600M.7 10.500h10.600" /></Slot>
      </NavBar>

      <BookmarkBar>
        {marks.map(([label, w, mr, div]) => (
          <React.Fragment key={label}>
            <BookmarkItem $mr={mr}><Folder /><Fit w={w}>{label}</Fit></BookmarkItem>
            {div && <MarkDivider />}
          </React.Fragment>
        ))}
        <BookmarkItem $mr={61}><YouTube /><Fit w={127}>Teens skirts try on dan...</Fit></BookmarkItem>
        <BookmarkItem $mr={14}><Line w={14} h={12} d="M1.500 1L6.500 6l-5 5M7.500 1l5 5-5 5" sw={1.300} /></BookmarkItem>
        <BookmarkItem $mr={0}><Folder /><Fit w={92}>Other Bookmarks</Fit></BookmarkItem>
      </BookmarkBar>

      <Page>
        <Content>
          <SiteHeader>
            <SiteLogo />
            <SiteNav>
              <NavEntry $mr={31}><Fit w={38}>HOME</Fit></NavEntry>
              <NavEntry $mr={31}><Fit w={67}>ABOUT US</Fit><Chev dir="down" c="#263c78" w={12} sw={1.700} /></NavEntry>
              <NavEntry $mr={30}><Fit w={45}>FORMS</Fit><Chev dir="down" c="#6b2028" w={12} sw={1.700} /></NavEntry>
              <NavEntry $mr={31}><Fit w={80}>RESOURCES</Fit></NavEntry>
              <NavEntry $mr={55}><Fit w={82}>CONTACT US</Fit></NavEntry>
              <Line w={21} h={21} c="#858585" sw={1.400}><circle cx="8.500" cy="8.500" r="7" /><path d="M13.500 13.500l6 6" /></Line>
            </SiteNav>
          </SiteHeader>
          <CardRow>
            {cards.map(([thumb, title, tw, sub, sw]) => (
              <Card key={title}>
                {thumb}
                <CardTitle><Fit w={tw} lh={26}>{title}</Fit></CardTitle>
                <CardText><Fit w={sw} lh={18}>{sub}</Fit></CardText>
                <DownloadButton><Fit w={124}>DOWNLOAD FORM</Fit></DownloadButton>
              </Card>
            ))}
          </CardRow>
        </Content>
        <ScrollTrack>
          <Slot $w={17} $h={17}><Chev dir="up" c="#505050" w={10} sw={2.600} /></Slot>
          <ScrollThumb />
          <Slot $w={17} $h={17}><Chev dir="down" c="#505050" w={10} sw={2.600} /></Slot>
        </ScrollTrack>
      </Page>

      <TaskBar>
        <AppCell $w={48}><svg width="16" height="16" viewBox="0 0 16 16" fill="#fff"><path d="M0 2.300l6.700-1v6.300H0zM7.500 1.200L16 0v7.600H7.500zM0 8.400h6.700v6.300l-6.700-1zM7.500 8.400H16V16l-8.500-1.200z" /></svg></AppCell>
        <SearchBox>
          <Line w={18} h={18} c="#fff" sw={1.300}><circle cx="11" cy="7" r="5.500" /><path d="M7 11l-5.500 6" /></Line>
          <Slot $w={12} />
          <Fit w={128}>Type here to search</Fit>
          <Slot $ml={44} $w={75} $h={38}>
            <svg width="75" height="38" viewBox="0 0 75 38">
              <defs><linearGradient id="dol" x1="0" y1="0" x2="0" y2="1"><stop offset="0" stopColor="#99a9b8" /><stop offset="1" stopColor="#5c6b7b" /></linearGradient></defs>
              <path d="M43 30Q53 21 62 26t13 1v11H38z" fill="#1577ae" />
              <path d="M13 25Q16 12 29 8.500l3-5 3 5Q47 6 58 11q6 4 11 8 0 4-8 4l-15 1-4 9-4-8Q26 24 19 30z" fill="url(#dol)" stroke="#465766" strokeWidth=".7" />
              <path d="M53 19q9 3 15-1-2 5-12 4z" fill="#d1d7dd" /><circle cx="54" cy="17" r="1.200" fill="#222" />
              <path d="M14 20q3-10 12-13M17 15q4-8 10-10" stroke="#cceeff" strokeWidth="1.700" strokeDasharray="3 2" fill="none" />
              <path d="M0 38Q1 25 14 24q12 1 20 7t17 0q11-2 24 2v5z" fill="#3aaed8" />
              <path d="M5 31q5-4 9 0l3-1q4 0 5 3 5-1 5 3-9 2-13-1-9 0-9-4z" fill="#f1faff" />
            </svg>
          </Slot>
        </SearchBox>
        <AppCell $w={48}><Line w={16} h={16} c="#fff" sw={1.200}><path d="M1 .8v2h9v-2M1 4.800h9v6.400H1zM1 15.200v-2h9v2M14 .5v3M14 9v6.500" /><circle cx="14" cy="5.800" r=".9" /></Line></AppCell>
        <AppCell $w={40} $ml={7}>
          <svg width="21" height="22" viewBox="0 0 21 22"><path d="M7 1h6q2 0 2.500 2l1 4h-5L8 17q-.5 2-2.500 2H3q-3-1-2.300-4L4 3.500Q5 1 7 1z" fill="#2296e5" /><path d="M7 1h5L7.500 15H.7L4 3.500Q5 1 7 1z" fill="#30c2ad" /><path d="M2 10L.7 15Q.5 19 4 19h2l3-9z" fill="#d9c733" /><path d="M14.500 7h3q3 1 2.700 4L17 19q-1 2.500-3 2.500H8q-1.500 0-2-2h2q1.500 0 2-2z" fill="#ed5b91" /><path d="M14.500 7h3q3 1 2.700 4l-1 3H12z" fill="#b86cde" /><path d="M10 17.500h7.500L17 19q-1 2.500-3 2.500H8q-1.500 0-2-2 3 .5 4-2z" fill="#fd8754" /></svg>
        </AppCell>
        <AppCell $w={40} $ml={9} $open><svg width="22" height="20" viewBox="0 0 22 20"><path d="M0 1h8l2 2.500h12V19H0z" fill="#e8a91c" /><path d="M0 5h22v14H0z" fill="#ffd468" /><path d="M4 19v-7h14v7h-4v-3H8v3z" fill="#3594d7" /></svg></AppCell>
        <AppCell $w={40} $ml={8}><svg width="22" height="18" viewBox="0 0 22 18"><path d="M5 2l7-1 1 15-10-1-2-5z" fill="#e7e9ec" /><path d="M12 1l5 1 4 9-4 4-5 1z" fill="#c3cfc8" /><path d="M4 13L8 5M6.500 4q1.500-.5 2 1.500l1.500 7" stroke="#22307a" strokeWidth="1.500" fill="none" /><path d="M13 6l4-1-2 8" stroke="#304783" strokeWidth="1.500" fill="none" /></svg></AppCell>
        <AppCell $w={40} $ml={10}><svg width="24" height="25" viewBox="0 0 24 25"><path d="M1 8L3 3l20-2v5z" fill="#27a7e4" /><path d="M4 3l4 4M10 2l4 4M16 1.500l4 4" stroke="#0c5994" strokeWidth="2" /><rect x="1" y="8" width="22" height="16" rx="2" fill="#0874c9" /><path d="M9 11v10l8-5z" fill="#fff" /></svg></AppCell>
        <AppCell $w={40} $ml={8}><svg width="24" height="24" viewBox="0 0 24 24"><path d="M4 2l18-1-1 15-14-1z" fill="#d8dbe2" /><path d="M7 3.500l13-1-1 11L8 13z" fill="#1638c6" /><rect x="0" y="7" width="14" height="7" fill="#2886ca" stroke="#d5efff" strokeWidth=".8" /><path d="M2 9h10M2 11.500h10" stroke="#d7f0ff" strokeDasharray="1.500 1" /><path d="M11 16h6v3H11zM8 19h10l-2 3.500q-5 1-8-1z" fill="#c8c8c8" /></svg></AppCell>
        <AppCell $w={48} $ml={6} $open $active><Firefox s={24} /></AppCell>
        <AppCell $w={40} $ml={5} $open>
          <svg width="20" height="20" viewBox="-10 -10 20 20" fill="none" stroke="#fff"><circle r="5.800" strokeWidth="2.500" />{[0, 45, 90, 135, 180, 225, 270, 315].map((a) => <path key={a} d="M0-6.500V-9" strokeWidth="3.600" transform={`rotate(${a})`} />)}</svg>
        </AppCell>
        <TrayText $ml={34} $c="#dcdce6"><Fit w={43}>Desktop</Fit></TrayText>
        <TrayText $ml={8} $mt={-22}><Line w={8} h={6} c="#fff" sw={1.400} d="M1 .7L3.300 3 1 5.300M4.700.7L7 3 4.700 5.300" /></TrayText>
        <Slot $ml={19} $w={22} $h={26}>
          <svg width="22" height="24" viewBox="0 0 22 24"><defs><linearGradient id="wx" x1="0" y1="0" x2="0" y2="1"><stop offset="0" stopColor="#f7b12e" /><stop offset="1" stopColor="#ed701c" /></linearGradient></defs><circle cx="10" cy="13" r="9.800" fill="url(#wx)" /><circle cx="16" cy="6" r="5.800" fill="#c83225" /><text x="14" y="9" fontFamily="Open Sans" fontSize="8.500" fill="#fff">1</text></svg>
        </Slot>
        <Slot $ml={24}><Chev dir="up" c="#fff" sw={1.200} /></Slot>
        <Slot $ml={9}><Line w={16} h={12} c="#fff" sw={1.200} d="M1 2h12.500v8.500H1zM14 5h1.200v3H14M3.500 4.500h2v3.500h-2z" /></Slot>
        <Slot $ml={6}><Line w={18} h={16} c="#fff" sw={1.200} d="M1 5.500h2.500L7 2v12l-3.500-3.500H1zM9.500 5.500q1.600 2.500 0 5"><path d="M12 3.500q3 4.500 0 9M14.500 2q4 6 0 12" stroke="#a2a2b3" /></Line></Slot>
        <Slot $ml={10}><Line w={14} h={16} c="#fff" sw={1.200}><path d="M1 13Q2 4 13 2.500" stroke="#8f90a3" /><path d="M4 14q1-7 9-8M7 14.500q.5-4.500 6-5.500M10 15q.5-2 3-2.500" /><circle cx="12" cy="14" r=".7" fill="#fff" /></Line></Slot>
        <Slot $ml={11}><Line w={17} h={18} c="#fff" sw={1.200} d="M5.500 14L11 2.500q1.500-2 3-.7t.2 3.200L8 14.500l-3 2zM8 8Q4.500 6 2.500 9.500q-2 3.500-.5 5.200 1.500 1.300 3-.7M11 10.500q3-4.500 4.500-3T12.500 13" /></Slot>
        <Slot $ml={15}><Line w={24} h={14} c="#fff" sw={1.100}><path d="M.8.8h22.400v12.400H.8z" /><path d="M3.500 4h17M3.500 7h17" strokeDasharray="1 1.600" /><path d="M6 10.300h12" /></Line></Slot>
        <Slot $ml={16}><Line w={16} h={14} c="#fff" sw={1.200} d="M2 1h12q1 0 1 1v10q0 1-1 1H2q-1 0-1-1V2q0-1 1-1zM1 8h14M8 8v5" /></Slot>
        <TrayText $ml={15}><Fit w={23}>ENG</Fit></TrayText>
        <Clock><Fit w={43} lh={18}>4:07 PM</Fit><Fit w={52} lh={18}>2/17/2025</Fit></Clock>
        <NoticeCell><Line w={16} h={18} c="#fff" sw={1.200} d="M1 1.500h14v12h-4.500L8 16l-2.500-2.500H1z" /></NoticeCell>
        <DesktopEdge />
      </TaskBar>
    </Screen>
  );
}
